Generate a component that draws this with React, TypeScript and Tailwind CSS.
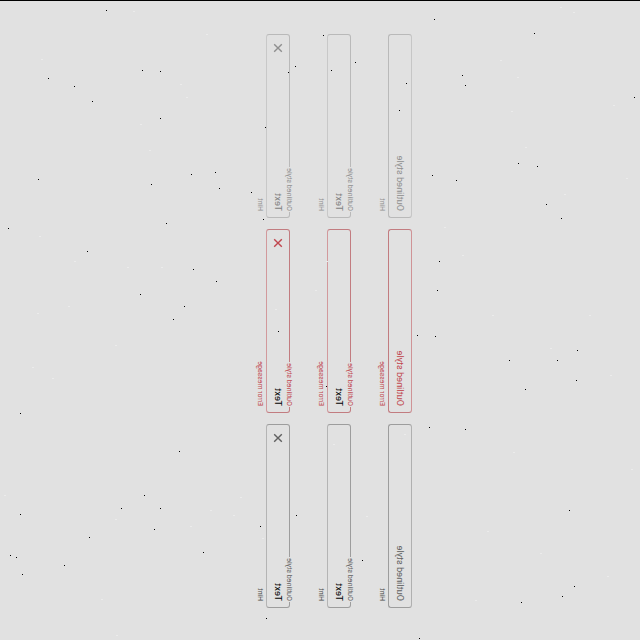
import React from "react";

type Tone = "normal" | "error" | "disabled";
type Kind = "empty" | "filled" | "clearable";

const line: Record<Tone, string> = {
  normal: "border-[#9d9d9d]",
  error: "border-[#c27c80]",
  disabled: "border-[#b9b9b9]",
};
const softTop: Record<Tone, string> = {
  normal: "border-t-[#b0b0b0]",
  error: "border-t-[#cf9396]",
  disabled: "border-t-[#c6c6c6]",
};
const softBottom: Record<Tone, string> = {
  normal: "border-b-[#b4b4b4]",
  error: "border-b-[#d2999c]",
  disabled: "border-b-[#c8c8c8]",
};
const labelColor: Record<Tone, string> = {
  normal: "text-[#606060]",
  error: "text-[#c0464e]",
  disabled: "text-[#8f8f8f]",
};
const valueColor: Record<Tone, string> = {
  normal: "text-black",
  error: "text-black",
  disabled: "text-[#808080]",
};
const hintColor: Record<Tone, string> = {
  normal: "text-[#484848]",
  error: "text-[#c0464e]",
  disabled: "text-[#8f8f8f]",
};

function Field({ tone, kind }: { tone: Tone; kind: Kind }) {
  const soft = kind === "empty" ? softTop[tone] : softBottom[tone];
  return (
    <div className="h-[61px] w-[184px]">
      <div className={`relative flex h-[24px] items-center justify-between rounded-[3px] border px-[6px] ${line[tone]} ${soft}`}>
        {kind === "empty" ? (
          <span className={`text-[9.2px] leading-[12px] ${labelColor[tone]}`}>Outlined style</span>
        ) : (
          <>
            <span className={`absolute -top-[5px] left-[5px] bg-[#e1e1e1] px-[1px] text-[7.1px] leading-[9px] ${labelColor[tone]}`}>
              Outlined style
            </span>
            <span className={`text-[9.3px] leading-[12px] ${valueColor[tone]}`}>Text</span>
          </>
        )}
        {kind === "clearable" && (
          <svg viewBox="0 0 10 10" className={`mr-[2px] size-[10px] ${labelColor[tone]}`}>
            <path d="M1.2 1.2 8.8 8.8M8.8 1.2 1.2 8.8" stroke="currentColor" strokeWidth="1.4" />
          </svg>
        )}
      </div>
      <div className={`pl-[7px] pt-[2px] text-[6.9px] leading-[9px] ${hintColor[tone]}`}>
        {tone === "error" ? "Error message" : "Hint"}
      </div>
    </div>
  );
}

const kinds: Kind[] = ["empty", "filled", "clearable"];
const tones: Tone[] = ["normal", "error", "disabled"];

const specks = [
  [106,10],[142,70],[160,71],[48,78],[74,86],[92,101],[160,118],[38,179],[151,184],[191,174],
  [8,228],[166,223],[87,251],[193,269],[140,294],[184,306],[173,319],[20,413],
  [179,451],[144,495],[121,508],[160,508],[20,514],[154,529],[89,537],[10,555],[16,557],[22,574],[64,565],[203,552],
  [434,19],[534,33],[462,75],[465,85],[634,97],[518,163],[537,166],[432,175],[456,180],[546,204],
  [561,218],[439,261],[437,290],[435,336],[577,350],[509,360],[557,360],[576,380],[525,389],
  [429,427],[465,429],[569,510],[574,586],[562,596],[521,602],
  [323,35],[295,66],[288,72],[355,62],[331,70],[406,83],[399,110],[251,192],[263,219],
  [278,331],[326,386],[417,335],[362,560],[266,618],[265,127],[215,172],[219,188],[216,281],[296,515],[260,526],[419,638],
];

const paleSpecks = [
  [133,11],[206,34],[41,59],[180,84],[186,97],[140,124],[149,150],[39,236],[74,261],[127,267],[161,267],
  [68,306],[37,313],[115,345],[32,367],[52,378],[115,519],[190,526],[101,599],[116,635],[4,495],
  [560,7],[573,12],[500,60],[517,77],[511,111],[613,105],[525,147],[564,194],[626,178],[444,227],[462,255],
  [492,315],[589,315],[550,348],[610,375],[513,452],[631,469],[487,531],[540,553],[607,576],[475,600],
  [326,261],[240,497],[210,510],[233,515],[262,538],[366,516],[333,444],[404,434],[315,290],[275,309],
];

export default function App() {
  return (
    <div className="relative size-[640px] overflow-hidden bg-[#e1e1e1] font-[Roboto,sans-serif]">
      <div className="size-[640px] pl-[32px] pt-[228px] [transform:matrix(0,-1,-1,0,0,0)]">
        {kinds.map((kind) => (
          <div key={kind} className="flex gap-[11px]">
            {tones.map((tone) => (
              <Field key={tone} tone={tone} kind={kind} />
            ))}
          </div>
        ))}
      </div>
      <svg className="absolute inset-0" width="640" height="640" shapeRendering="crispEdges">
        <rect width="640" height="1" fill="#000" />
        {paleSpecks.map(([x, y]) => (
          <rect key={`${x}-${y}`} x={x} y={y} width="2" height="1" fill="#ebebeb" />
        ))}
        {specks.map(([x, y]) => (
          <rect key={`${x}-${y}`} x={x} y={y} width="1" height="1" fill="#000" />
        ))}
      </svg>
    </div>
  );
}
